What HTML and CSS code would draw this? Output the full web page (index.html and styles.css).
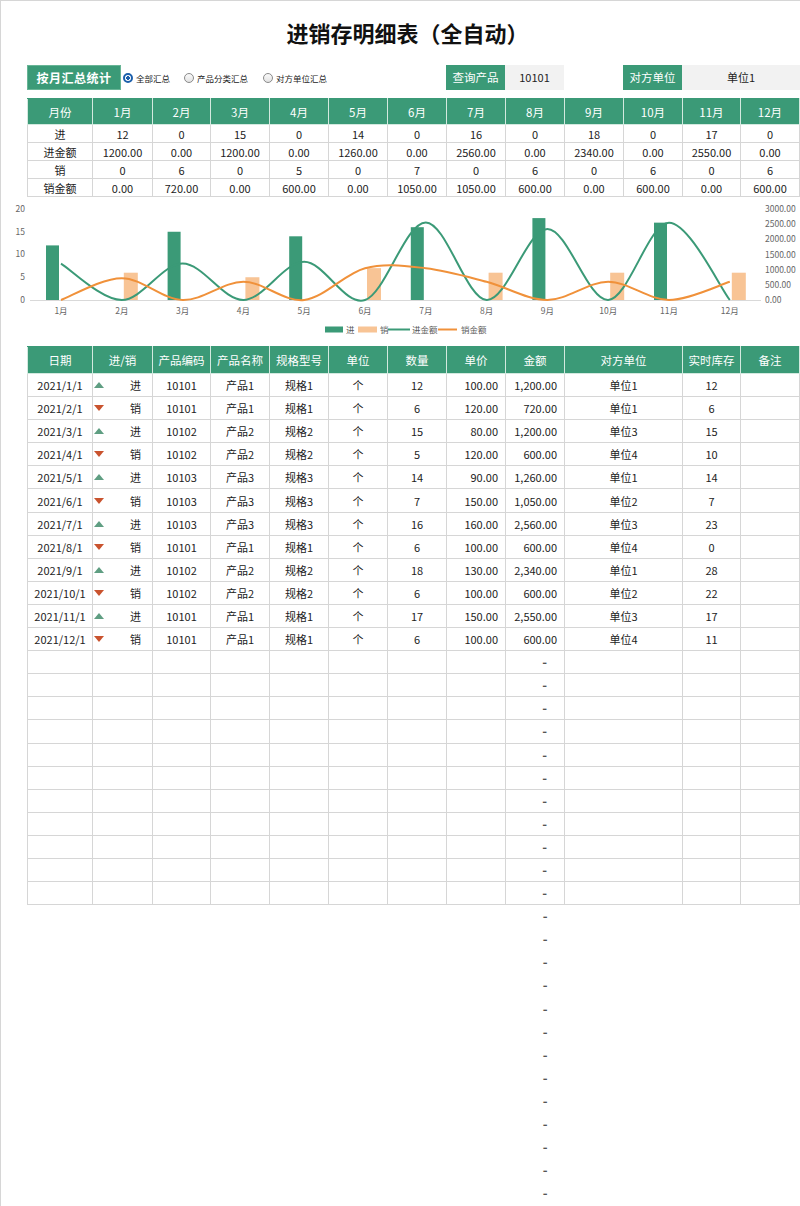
FILE: index.html
```html
<!DOCTYPE html>
<html lang="zh-CN">
<head>
<meta charset="utf-8">
<title>进销存明细表（全自动）</title>
<link rel="stylesheet" href="styles.css">
</head>
<body>
<div class="page">
  <h1 class="title">进销存明细表（全自动）</h1>

  <div class="controls">
    <div class="ctl-left">
      <div class="btn">按月汇总统计</div>
      <div class="radio r1 on"><span class="dot"></span>全部汇总</div>
      <div class="radio r2"><span class="dot"></span>产品分类汇总</div>
      <div class="radio r3"><span class="dot"></span>对方单位汇总</div>
    </div>
    <div class="lbl">查询产品</div>
    <div class="val">10101</div>
    <div class="gap"></div>
    <div class="lbl">对方单位</div>
    <div class="val">单位1</div>
  </div>

  <table class="month">
    <colgroup>
      <col class="c65"><col class="c60"><col class="c58"><col class="c59"><col class="c59"><col class="c59"><col class="c59"><col class="c59"><col class="c59"><col class="c59"><col class="c59"><col class="c58"><col class="c59">
    </colgroup>
    <thead>
      <tr><th>月份</th><th>1月</th><th>2月</th><th>3月</th><th>4月</th><th>5月</th><th>6月</th><th>7月</th><th>8月</th><th>9月</th><th>10月</th><th>11月</th><th>12月</th></tr>
    </thead>
    <tbody>
      <tr><td>进</td><td>12</td><td>0</td><td>15</td><td>0</td><td>14</td><td>0</td><td>16</td><td>0</td><td>18</td><td>0</td><td>17</td><td>0</td></tr>
      <tr><td>进金额</td><td>1200.00</td><td>0.00</td><td>1200.00</td><td>0.00</td><td>1260.00</td><td>0.00</td><td>2560.00</td><td>0.00</td><td>2340.00</td><td>0.00</td><td>2550.00</td><td>0.00</td></tr>
      <tr><td>销</td><td>0</td><td>6</td><td>0</td><td>5</td><td>0</td><td>7</td><td>0</td><td>6</td><td>0</td><td>6</td><td>0</td><td>6</td></tr>
      <tr><td>销金额</td><td>0.00</td><td>720.00</td><td>0.00</td><td>600.00</td><td>0.00</td><td>1050.00</td><td>1050.00</td><td>600.00</td><td>0.00</td><td>600.00</td><td>0.00</td><td>600.00</td></tr>
    </tbody>
  </table>

  <svg class="chart" width="799" height="149" viewBox="1 196 799 149" xmlns="http://www.w3.org/2000/svg">
    <g class="axis-l" font-size="8.5" fill="#666" text-anchor="end">
      <text x="25" y="211">20</text>
      <text x="25" y="234">15</text>
      <text x="25" y="256">10</text>
      <text x="25" y="279">5</text>
      <text x="25" y="302">0</text>
    </g>
    <g class="axis-r" font-size="8.5" fill="#666" text-anchor="start">
      <text x="765" y="211">3000.00</text>
      <text x="765" y="226">2500.00</text>
      <text x="765" y="241">2000.00</text>
      <text x="765" y="257">1500.00</text>
      <text x="765" y="272">1000.00</text>
      <text x="765" y="287">500.00</text>
      <text x="765" y="302">0.00</text>
    </g>
    <line x1="30" y1="299.5" x2="761" y2="299.5" stroke="#d9d9d9" stroke-width="1"/>
    <g class="axis-x" font-size="8.5" fill="#666" text-anchor="middle">
      <text x="61" y="313">1月</text>
      <text x="121.8" y="313">2月</text>
      <text x="182.6" y="313">3月</text>
      <text x="243.4" y="313">4月</text>
      <text x="304.2" y="313">5月</text>
      <text x="365" y="313">6月</text>
      <text x="425.8" y="313">7月</text>
      <text x="486.6" y="313">8月</text>
      <text x="547.4" y="313">9月</text>
      <text x="608.2" y="313">10月</text>
      <text x="669" y="313">11月</text>
      <text x="729.8" y="313">12月</text>
    </g>
    <g fill="#3b9a77">
      <rect x="46" y="244.4" width="13" height="54.6"/>
      <rect x="167.6" y="230.75" width="13" height="68.25"/>
      <rect x="289.2" y="235.3" width="13" height="63.7"/>
      <rect x="410.8" y="226.2" width="13" height="72.8"/>
      <rect x="532.4" y="217.1" width="13" height="81.9"/>
      <rect x="654" y="221.65" width="13" height="77.35"/>
    </g>
    <g fill="#f8c495">
      <rect x="123.8" y="271.7" width="14" height="27.3"/>
      <rect x="245.4" y="276.25" width="14" height="22.75"/>
      <rect x="367" y="267.15" width="14" height="31.85"/>
      <rect x="488.6" y="271.7" width="14" height="27.3"/>
      <rect x="610.2" y="271.7" width="14" height="27.3"/>
      <rect x="731.8" y="271.7" width="14" height="27.3"/>
    </g>
    <path fill="none" stroke="#3b9a77" stroke-width="2" d="M61 262.6 C71.13 268.67 101.53 299 121.8 299 C142.07 299 162.33 262.6 182.6 262.6 C202.87 262.6 223.13 299.3 243.4 299 C263.67 298.7 283.93 260.8 304.2 260.8 C324.47 260.8 344.73 305.57 365 299 C385.27 292.43 405.53 221.4 425.8 221.4 C446.07 221.4 466.33 297.9 486.6 299 C506.87 300.1 527.13 228 547.4 228 C567.67 228 587.93 300.05 608.2 299 C628.47 297.95 648.73 221.7 669 221.7 C689.27 221.7 719.67 286.12 729.8 299"/>
    <path fill="none" stroke="#f0913a" stroke-width="2" d="M61 299 C71.13 295.37 101.53 277.2 121.8 277.2 C142.07 277.2 162.33 298.4 182.6 299 C202.87 299.6 223.13 280.8 243.4 280.8 C263.67 280.8 283.93 301.27 304.2 299 C324.47 296.73 344.73 272.5 365 267.2 C385.27 261.9 405.53 264.93 425.8 267.2 C446.07 269.47 466.33 275.5 486.6 280.8 C506.87 286.1 527.13 299 547.4 299 C567.67 299 587.93 280.8 608.2 280.8 C628.47 280.8 648.73 299 669 299 C689.27 299 719.67 283.83 729.8 280.8"/>
    <g class="legend" font-size="8.5" fill="#595959">
      <rect x="325" y="325.5" width="18" height="6" fill="#3b9a77"/>
      <text x="346" y="331.5">进</text>
      <rect x="358" y="325.5" width="19" height="6" fill="#f8c495"/>
      <text x="380" y="331.5">销</text>
      <line x1="388" y1="328.5" x2="410" y2="328.5" stroke="#3b9a77" stroke-width="2"/>
      <text x="412" y="331.5">进金额</text>
      <line x1="438" y1="328.5" x2="457" y2="328.5" stroke="#f0913a" stroke-width="2"/>
      <text x="461" y="331.5">销金额</text>
    </g>
  </svg>

  <table class="detail">
    <colgroup>
      <col class="c65"><col class="c60"><col class="c58"><col class="c59"><col class="c59"><col class="c59"><col class="c59"><col class="c59"><col class="c59"><col class="c118"><col class="c58"><col class="c59">
    </colgroup>
    <thead>
      <tr><th>日期</th><th>进/销</th><th>产品编码</th><th>产品名称</th><th>规格型号</th><th>单位</th><th>数量</th><th>单价</th><th>金额</th><th>对方单位</th><th>实时库存</th><th>备注</th></tr>
    </thead>
    <tbody>
      <tr><td>2021/1/1</td><td><div class="io"><span class="tri up"></span>进</div></td><td>10101</td><td>产品1</td><td>规格1</td><td>个</td><td>12</td><td class="r">100.00</td><td class="r">1,200.00</td><td>单位1</td><td>12</td><td></td></tr>
      <tr><td>2021/2/1</td><td><div class="io"><span class="tri down"></span>销</div></td><td>10101</td><td>产品1</td><td>规格1</td><td>个</td><td>6</td><td class="r">120.00</td><td class="r">720.00</td><td>单位1</td><td>6</td><td></td></tr>
      <tr><td>2021/3/1</td><td><div class="io"><span class="tri up"></span>进</div></td><td>10102</td><td>产品2</td><td>规格2</td><td>个</td><td>15</td><td class="r">80.00</td><td class="r">1,200.00</td><td>单位3</td><td>15</td><td></td></tr>
      <tr><td>2021/4/1</td><td><div class="io"><span class="tri down"></span>销</div></td><td>10102</td><td>产品2</td><td>规格2</td><td>个</td><td>5</td><td class="r">120.00</td><td class="r">600.00</td><td>单位4</td><td>10</td><td></td></tr>
      <tr><td>2021/5/1</td><td><div class="io"><span class="tri up"></span>进</div></td><td>10103</td><td>产品3</td><td>规格3</td><td>个</td><td>14</td><td class="r">90.00</td><td class="r">1,260.00</td><td>单位1</td><td>14</td><td></td></tr>
      <tr><td>2021/6/1</td><td><div class="io"><span class="tri down"></span>销</div></td><td>10103</td><td>产品3</td><td>规格3</td><td>个</td><td>7</td><td class="r">150.00</td><td class="r">1,050.00</td><td>单位2</td><td>7</td><td></td></tr>
      <tr><td>2021/7/1</td><td><div class="io"><span class="tri up"></span>进</div></td><td>10103</td><td>产品3</td><td>规格3</td><td>个</td><td>16</td><td class="r">160.00</td><td class="r">2,560.00</td><td>单位3</td><td>23</td><td></td></tr>
      <tr><td>2021/8/1</td><td><div class="io"><span class="tri down"></span>销</div></td><td>10101</td><td>产品1</td><td>规格1</td><td>个</td><td>6</td><td class="r">100.00</td><td class="r">600.00</td><td>单位4</td><td>0</td><td></td></tr>
      <tr><td>2021/9/1</td><td><div class="io"><span class="tri up"></span>进</div></td><td>10102</td><td>产品2</td><td>规格2</td><td>个</td><td>18</td><td class="r">130.00</td><td class="r">2,340.00</td><td>单位1</td><td>28</td><td></td></tr>
      <tr><td>2021/10/1</td><td><div class="io"><span class="tri down"></span>销</div></td><td>10102</td><td>产品2</td><td>规格2</td><td>个</td><td>6</td><td class="r">100.00</td><td class="r">600.00</td><td>单位2</td><td>22</td><td></td></tr>
      <tr><td>2021/11/1</td><td><div class="io"><span class="tri up"></span>进</div></td><td>10101</td><td>产品1</td><td>规格1</td><td>个</td><td>17</td><td class="r">150.00</td><td class="r">2,550.00</td><td>单位3</td><td>17</td><td></td></tr>
      <tr><td>2021/12/1</td><td><div class="io"><span class="tri down"></span>销</div></td><td>10101</td><td>产品1</td><td>规格1</td><td>个</td><td>6</td><td class="r">100.00</td><td class="r">600.00</td><td>单位4</td><td>11</td><td></td></tr>
      <tr><td></td><td></td><td></td><td></td><td></td><td></td><td></td><td></td><td class="dash">-</td><td></td><td></td><td></td></tr>
      <tr><td></td><td></td><td></td><td></td><td></td><td></td><td></td><td></td><td class="dash">-</td><td></td><td></td><td></td></tr>
      <tr><td></td><td></td><td></td><td></td><td></td><td></td><td></td><td></td><td class="dash">-</td><td></td><td></td><td></td></tr>
      <tr><td></td><td></td><td></td><td></td><td></td><td></td><td></td><td></td><td class="dash">-</td><td></td><td></td><td></td></tr>
      <tr><td></td><td></td><td></td><td></td><td></td><td></td><td></td><td></td><td class="dash">-</td><td></td><td></td><td></td></tr>
      <tr><td></td><td></td><td></td><td></td><td></td><td></td><td></td><td></td><td class="dash">-</td><td></td><td></td><td></td></tr>
      <tr><td></td><td></td><td></td><td></td><td></td><td></td><td></td><td></td><td class="dash">-</td><td></td><td></td><td></td></tr>
      <tr><td></td><td></td><td></td><td></td><td></td><td></td><td></td><td></td><td class="dash">-</td><td></td><td></td><td></td></tr>
      <tr><td></td><td></td><td></td><td></td><td></td><td></td><td></td><td></td><td class="dash">-</td><td></td><td></td><td></td></tr>
      <tr><td></td><td></td><td></td><td></td><td></td><td></td><td></td><td></td><td class="dash">-</td><td></td><td></td><td></td></tr>
      <tr><td></td><td></td><td></td><td></td><td></td><td></td><td></td><td></td><td class="dash">-</td><td></td><td></td><td></td></tr>
    </tbody>
    <tbody class="ghost">
      <tr><td colspan="8"></td><td class="dash">-</td><td colspan="3"></td></tr>
      <tr><td colspan="8"></td><td class="dash">-</td><td colspan="3"></td></tr>
      <tr><td colspan="8"></td><td class="dash">-</td><td colspan="3"></td></tr>
      <tr><td colspan="8"></td><td class="dash">-</td><td colspan="3"></td></tr>
      <tr><td colspan="8"></td><td class="dash">-</td><td colspan="3"></td></tr>
      <tr><td colspan="8"></td><td class="dash">-</td><td colspan="3"></td></tr>
      <tr><td colspan="8"></td><td class="dash">-</td><td colspan="3"></td></tr>
      <tr><td colspan="8"></td><td class="dash">-</td><td colspan="3"></td></tr>
      <tr><td colspan="8"></td><td class="dash">-</td><td colspan="3"></td></tr>
      <tr><td colspan="8"></td><td class="dash">-</td><td colspan="3"></td></tr>
      <tr><td colspan="8"></td><td class="dash">-</td><td colspan="3"></td></tr>
      <tr><td colspan="8"></td><td class="dash">-</td><td colspan="3"></td></tr>
      <tr><td colspan="8"></td><td class="dash">-</td><td colspan="3"></td></tr>
    </tbody>
  </table>
</div>
</body>
</html>
```

FILE: styles.css
```css
* { box-sizing: border-box; }
html, body { margin: 0; padding: 0; background: #fff; }
body {
  font-family: "Noto Sans CJK SC", "Noto Sans", sans-serif;
  color: #222;
  width: 800px;
  overflow: hidden;
}
.page {
  width: 800px;
  min-height: 1206px;
  height: 1206px;
  overflow: hidden;
  border-left: 1px solid #d6d6d6;
  border-top: 1px solid #d6d6d6;
}
.title {
  margin: 0;
  padding: 18px 0 0 14px;
  height: 44px;
  line-height: 26px;
  font-size: 22px;
  font-weight: bold;
  text-align: center;
  color: #111;
}

/* controls */
.controls {
  margin: 20px 0 0 26px;
  height: 25px;
  display: grid;
  grid-template-columns: 419px 59px 59px 59px 59px 1fr;
}
.ctl-left { display: flex; align-items: center; }
.btn {
  width: 94px;
  height: 25px;
  background: #3b9a77;
  border: 1px solid #68b596;
  color: #fff;
  font-weight: bold;
  font-size: 12px;
  line-height: 23px;
  text-align: center;
  letter-spacing: 0.5px;
}
.radio {
  display: flex;
  align-items: center;
  font-size: 8.5px;
  color: #222;
  height: 25px;
}
.r1 { margin-left: 2px; width: 61px; }
.r2 { width: 79px; }
.radio .dot {
  width: 10px;
  height: 10px;
  border-radius: 50%;
  border: 1px solid #8a8a8a;
  background: linear-gradient(#fafafa, #e2e2e2);
  margin-right: 3px;
  flex: none;
}
.radio.on .dot {
  border: 2px solid #1c5fab;
  background: radial-gradient(circle, #1c5fab 0 1.6px, #fff 2px);
}
.lbl, .val {
  height: 25px;
  line-height: 25px;
  text-align: center;
  font-size: 11.5px;
}
.lbl { background: #3b9a77; color: #fff; }
.val { background: #f2f2f2; color: #222; font-size: 11px; }

/* column widths */
.c65 { width: 65px; }
.c60 { width: 60px; }
.c58 { width: 58px; }
.c59 { width: 59px; }
.c118 { width: 118px; }

/* monthly summary */
.month {
  margin: 8px 0 0 26px;
  border-collapse: collapse;
  table-layout: fixed;
  width: 772px;
}
.month th {
  height: 26px;
  padding: 0;
  background: #3b9a77;
  color: #fff;
  font-weight: normal;
  font-size: 11.5px;
  border: 1px solid #d3e9df;
  border-top-color: #3b9a77;
}
.month td {
  height: 18px;
  padding: 0;
  border: 1px solid #d6d6d6;
  text-align: center;
  font-size: 11px;
  line-height: 16px;
}

.chart { display: block; font-family: "Noto Sans CJK SC", "Noto Sans", sans-serif; }

/* detail */
.detail {
  margin: 0 0 0 26px;
  border-collapse: collapse;
  table-layout: fixed;
  width: 772px;
}
.detail th {
  height: 27px;
  padding: 0;
  background: #3b9a77;
  color: #fff;
  font-weight: normal;
  font-size: 11.5px;
  border: 1px solid #d3e9df;
  border-top-color: #3b9a77;
}
.detail td {
  height: 23.1px;
  padding: 0;
  border: 1px solid #d6d6d6;
  text-align: center;
  font-size: 11px;
  line-height: 16px;
}
.detail td.r { text-align: right; padding-right: 7px; }
.detail td.dash {
  text-align: right;
  padding-right: 17px;
  color: #555;
  font-size: 13px;
  font-weight: bold;
}
.detail .ghost td { border: none; }
.io {
  display: flex;
  align-items: center;
  justify-content: space-between;
  padding: 0 11px 0 1px;
}
.tri { width: 0; height: 0; border-left: 5px solid transparent; border-right: 5px solid transparent; }
.tri.up { border-bottom: 6px solid #5f9e82; }
.tri.down { border-top: 6px solid #c9532e; }
```
